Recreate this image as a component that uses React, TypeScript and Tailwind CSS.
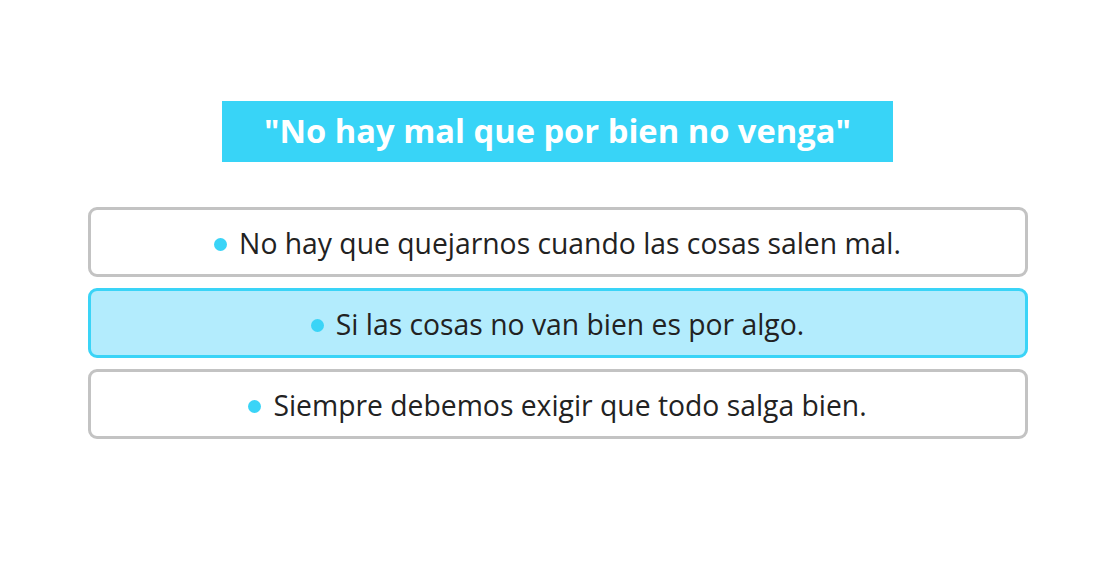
import React from "react";

const options = [
  { text: "No hay que quejarnos cuando las cosas salen mal.", selected: false },
  { text: "Si las cosas no van bien es por algo.", selected: true },
  { text: "Siempre debemos exigir que todo salga bien.", selected: false },
];

export default function App() {
  return (
    <div
      className="min-h-[565px] w-full bg-white pl-[10px] pt-[101px] flex flex-col items-center"
      style={{ fontFamily: '"Open Sans", "Noto Sans", sans-serif' }}
    >
      <div className="w-[671px] h-[61px] bg-[#38d4f7] flex items-center justify-center">
        <span className="text-white font-bold text-[32.7px] leading-none">
          "No hay mal que por bien no venga"
        </span>
      </div>
      <div className="mt-[45px] w-[940px] flex flex-col gap-[11px]">
        {options.map((o) => (
          <div
            key={o.text}
            className={
              o.selected
                ? "h-[70px] rounded-[9px] border-[3px] border-[#3ad4f7] bg-[#b3ecfd] flex items-center justify-center pt-[3px]"
                : "h-[70px] rounded-[9px] border-[3px] border-[#c3c3c3] bg-white flex items-center justify-center pt-[3px]"
            }
          >
            <span className="inline-block w-[13px] h-[13px] rounded-full bg-[#3ad4f7] mr-[12px] mt-[2px]" />
            <span className="text-[#222] text-[28.3px] font-[380] leading-none">{o.text}</span>
          </div>
        ))}
      </div>
    </div>
  );
}
